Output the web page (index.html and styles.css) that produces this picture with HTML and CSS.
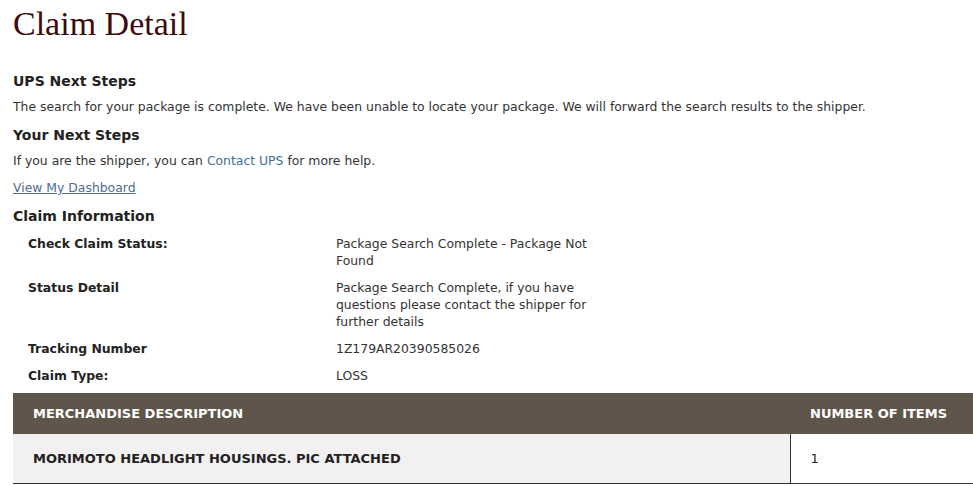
FILE: index.html
```html
<!DOCTYPE html>
<html lang="en">

<head>
    <meta charset="UTF-8">
    <meta name="viewport" content="width=device-width, initial-scale=1.0">
    <title>Claim Detail</title>
    <link rel="stylesheet" href="styles.css">
</head>

<body>
    <div class="page">
        <h1>Claim Detail</h1>

        <h2 class="first">UPS Next Steps</h2>
        <p>The search for your package is complete. We have been unable to locate your package. We will forward the search results to the shipper.</p>

        <h2>Your Next Steps</h2>
        <p>If you are the shipper, you can <a href="#" class="plain-link">Contact UPS</a> for more help.</p>

        <p><a href="#" class="dashboard-link">View My Dashboard</a></p>

        <h2>Claim Information</h2>
        <dl class="claim-info">
            <dt>Check Claim Status:</dt>
            <dd>Package Search Complete - Package Not Found</dd>
            <dt>Status Detail</dt>
            <dd>Package Search Complete, if you have questions please contact the shipper for further details</dd>
            <dt>Tracking Number</dt>
            <dd>1Z179AR20390585026</dd>
            <dt>Claim Type:</dt>
            <dd>LOSS</dd>
        </dl>

        <table class="merch-table">
            <thead>
                <tr>
                    <th>MERCHANDISE DESCRIPTION</th>
                    <th class="count-col">NUMBER OF ITEMS</th>
                </tr>
            </thead>
            <tbody>
                <tr>
                    <td class="desc-cell">MORIMOTO HEADLIGHT HOUSINGS. PIC ATTACHED</td>
                    <td class="count-cell">1</td>
                </tr>
            </tbody>
        </table>
    </div>
</body>

</html>
```

FILE: styles.css
```css
body {
    font-family: "DejaVu Sans", Verdana, sans-serif;
    font-size: 12.4px;
    color: #333;
    background-color: #fff;
    margin: 0;
    overflow: hidden;
}

.page {
    padding: 0 0 0 13px;
}

h1 {
    font-family: "Liberation Serif", Georgia, serif;
    font-weight: normal;
    font-size: 34px;
    color: #3d0c0c;
    margin: 0;
    padding-top: 4px;
    line-height: 40px;
}

h2 {
    font-size: 14px;
    font-weight: bold;
    color: #222;
    margin: 0;
    line-height: 20px;
}

h2.first {
    margin-top: 27px;
}

p {
    margin: 7px 0 9px;
    line-height: 18px;
}

.plain-link {
    color: #3f6ea0;
    text-decoration: none;
}

.dashboard-link {
    color: #4f6d92;
    text-decoration: underline;
}

.claim-info {
    display: grid;
    grid-template-columns: 308px 256px;
    row-gap: 10px;
    margin: 9px 0 9px;
    padding-left: 15px;
    line-height: 17px;
}

.claim-info dt {
    font-weight: bold;
    color: #222;
}

.claim-info dd {
    margin: 0;
}

.merch-table {
    width: 100%;
    border-collapse: collapse;
    font-size: 13px;
}

.merch-table th {
    background-color: #5f554b;
    color: #fff;
    text-align: left;
    font-weight: bold;
    padding: 12px 20px;
    height: 17px;
}

.merch-table td {
    padding: 16px 20px;
    height: 17px;
    border-bottom: 1px solid #333;
    color: #222;
}

.desc-cell {
    background-color: #f2f0f0;
    font-weight: bold;
}

.count-col {
    width: 143px;
}

.count-cell {
    background-color: #fff;
    border-left: 1px solid #333;
}
```
